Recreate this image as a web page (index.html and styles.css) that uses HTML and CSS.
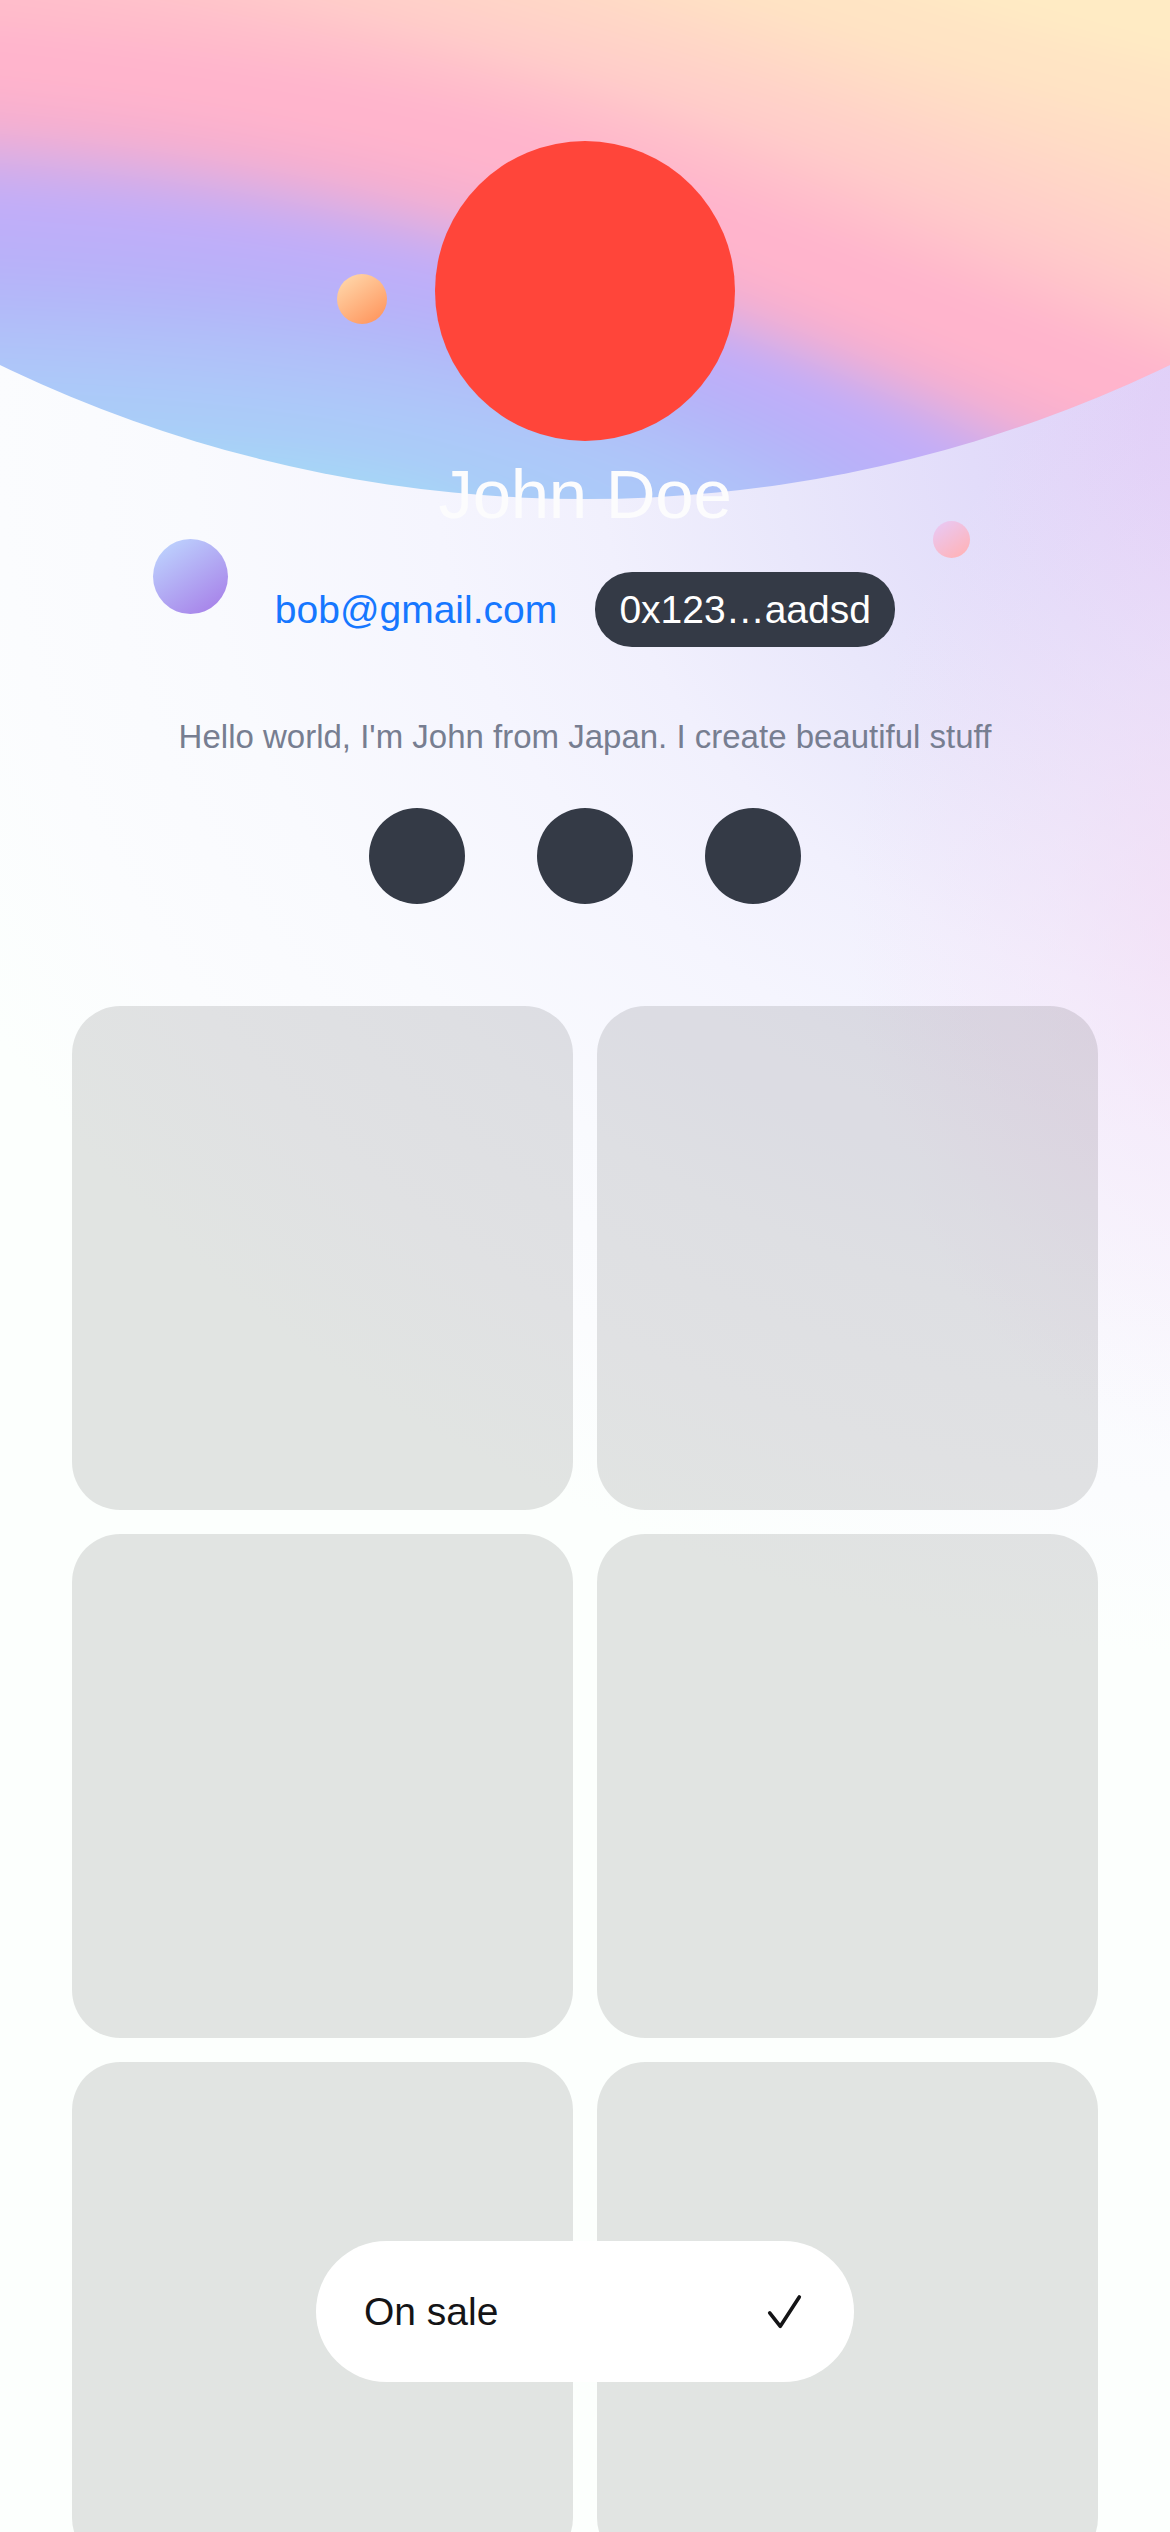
FILE: index.html
```html
<!DOCTYPE html>
<html lang="en">
<head>
  <meta charset="utf-8">
  <title>John Doe</title>
  <link rel="stylesheet" href="styles.css">
</head>
<body>
  <main class="page">
    <svg class="cover" viewBox="0 0 1170 499" width="1170" height="499" aria-hidden="true">
      <defs>
        <clipPath id="arc"><circle cx="585" cy="-845" r="1344"/></clipPath>
        <filter id="soft" filterUnits="userSpaceOnUse" x="-200" y="-200" width="1570" height="900" color-interpolation-filters="sRGB">
          <feGaussianBlur stdDeviation="17"/>
        </filter>
      </defs>
      <g clip-path="url(#arc)">
        <g filter="url(#soft)">
          <rect x="-200" y="-200" width="1570" height="900" fill="#ffebc4"/>
          <path fill="#ffe4c4" d="M700 -90 Q930 20 1370 110 V700 H-200 V-200 H600Z"/>
          <path fill="#ffddc5" d="M500 -80 Q820 45 1370 185 V700 H-200 V-200 H400Z"/>
          <path fill="#ffd6c7" d="M350 -85 Q740 40 1170 190 L1370 265 V700 H-200 V-200Z"/>
          <path fill="#ffcfc9" d="M200 -90 C460 10 700 60 860 120 S1100 215 1370 320 V700 H-200 V-200Z"/>
          <path fill="#ffc7ca" d="M50 -80 C330 10 560 60 760 130 S1070 250 1370 370 V700 H-200 V-200Z"/>
          <path fill="#ffbdcb" d="M-200 -60 C200 0 420 50 600 105 S1000 270 1370 405 V700 H-200Z"/>
          <path fill="#ffb4cc" d="M-200 10 C100 25 400 80 560 130 S1000 305 1370 440 V700 H-200Z"/>
          <path fill="#f7b0cf" d="M-200 84 C50 86 330 136 500 186 S960 365 1370 530 V700 H-200Z"/>
          <path fill="#e3afdf" d="M-200 126 C50 126 300 170 480 221 S900 367 1110 470 V700 H-200Z"/>
          <path fill="#cfaeed" d="M-200 153 C50 153 290 192 460 240 S890 378 1060 478 V700 H-200Z"/>
          <path fill="#c0aef9" d="M-200 182 C50 182 280 218 450 260 S860 380 1030 500 V700 H-200Z"/>
          <path fill="#b9b1f9" d="M-200 230 C50 230 280 256 450 296 S820 400 960 510 V700 H-200Z"/>
          <path fill="#b3b8f9" d="M-200 275 C50 275 280 292 450 330 S780 420 900 520 V700 H-200Z"/>
          <path fill="#b0c1f9" d="M-200 315 C50 315 280 330 430 362 S740 440 860 540 V700 H-200Z"/>
          <path fill="#adc8f9" d="M-200 355 C50 355 250 370 410 400 S680 460 770 540 V700 H-200Z"/>
          <path fill="#aaccf8" d="M-200 388 C50 388 250 400 390 430 S600 490 690 560 V700 H-200Z"/>
          <path fill="#a6d6f6" d="M-200 430 C50 432 250 440 370 466 S480 510 550 560 V700 H-200Z"/>
        </g>
      </g>
    </svg>
    <span class="dot dot-orange"></span>
    <span class="dot dot-blue"></span>
    <span class="dot dot-pink"></span>

    <header class="profile">
      <div class="avatar"></div>
      <h1 class="name">John Doe</h1>
      <div class="contacts">
        <a class="email">bob@gmail.com</a>
        <span class="wallet">0x123…aadsd</span>
      </div>
      <p class="bio">Hello world, I'm John from Japan. I create beautiful stuff</p>
      <div class="socials">
        <span class="social"></span>
        <span class="social"></span>
        <span class="social"></span>
      </div>
    </header>

    <section class="gallery">
      <div class="card"></div>
      <div class="card"></div>
      <div class="card"></div>
      <div class="card"></div>
      <div class="card"></div>
      <div class="card"></div>
    </section>

    <div class="filter">
      <span>On sale</span>
      <svg class="check" viewBox="0 0 36 36" width="36" height="36" aria-hidden="true">
        <path d="M3.7 18.8 14.3 32.3 33.3 3"/>
      </svg>
    </div>
  </main>
</body>
</html>
```
FILE: styles.css
```css
* {
  box-sizing: border-box;
}

body {
  margin: 0;
  font-family: "Liberation Sans", Arial, sans-serif;
}

.page {
  position: relative;
  height: 2532px;
  overflow: hidden;
  background:
    radial-gradient(380px 560px at 1230px 900px, rgba(245, 220, 244, 0.75), rgba(246, 224, 246, 0.4) 45%, rgba(250, 240, 250, 0) 100%),
    radial-gradient(1500px 1230px at 1300px 430px, #dfcdf8 0%, #e0d0f8 10%, #e2dcfa 22%, #e9e7fb 35%, #f1f0fd 47%, #f5f5fe 58%, #f9fafe 74%, #fbfcfe 87%, #fcfffd 100%);
}

.cover {
  position: absolute;
  top: 0;
  left: 0;
}

.dot {
  position: absolute;
  border-radius: 50%;
}

.dot-orange {
  top: 274px;
  left: 337px;
  width: 50px;
  height: 50px;
  background: linear-gradient(145deg, #ffd5a8 10%, #ff935a 95%);
}

.dot-blue {
  top: 539px;
  left: 153px;
  width: 75px;
  height: 75px;
  background: linear-gradient(145deg, #bdd3fe 8%, #a67ee8 95%);
}

.dot-pink {
  top: 521px;
  left: 933px;
  width: 37px;
  height: 37px;
  background: linear-gradient(145deg, #eac8f2 10%, #ffb3b8 90%);
}

.profile {
  position: relative;
  display: flex;
  flex-direction: column;
  align-items: center;
  padding-top: 141px;
}

.avatar {
  width: 300px;
  height: 300px;
  border-radius: 50%;
  background: #ff453a;
}

.name {
  margin: 14px 0 0;
  font-size: 69px;
  font-weight: 400;
  line-height: 80px;
  letter-spacing: -0.3px;
  color: #fcfcfd;
}

.contacts {
  display: flex;
  align-items: center;
  gap: 38px;
  margin-top: 37px;
  font-size: 39px;
}

.email {
  color: #1677ff;
}

.wallet {
  width: 300px;
  height: 75px;
  border-radius: 37px;
  background: #343a46;
  color: #fff;
  line-height: 75px;
  text-align: center;
}

.bio {
  margin: 70px 0 0;
  font-size: 33px;
  line-height: 40px;
  white-space: nowrap;
  color: #777e91;
}

.socials {
  display: flex;
  gap: 72px;
  margin-top: 51px;
}

.social {
  width: 96px;
  height: 96px;
  border-radius: 50%;
  background: #343a46;
}

.gallery {
  display: grid;
  grid-template-columns: 1fr 1fr;
  grid-auto-rows: 504px;
  gap: 24px;
  margin-top: 102px;
  padding: 0 72px;
}

.card {
  border-radius: 48px;
  background: rgba(0, 0, 0, 0.105);
}

.filter {
  position: absolute;
  top: 2241px;
  left: 316px;
  display: flex;
  align-items: center;
  justify-content: space-between;
  width: 538px;
  height: 141px;
  padding: 0 52px 0 48px;
  border-radius: 71px;
  background: #fff;
  color: #141416;
  font-size: 39px;
}

.check {
  fill: none;
  stroke: #141416;
  stroke-width: 3.6;
  stroke-linecap: round;
  stroke-linejoin: round;
}
```
